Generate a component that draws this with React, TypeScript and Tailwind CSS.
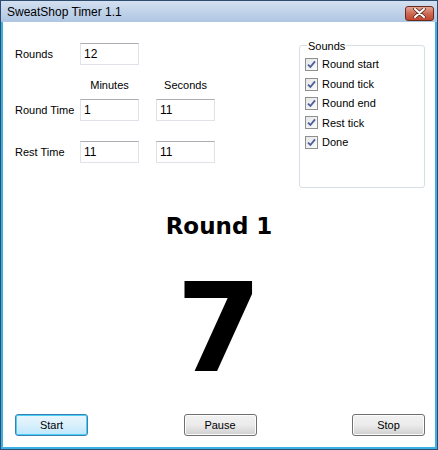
import React from "react";

const ui = { fontFamily: '"Liberation Sans", Arial, sans-serif' };

const Field: React.FC<{ value: string }> = ({ value }) => (
  <div className="w-[59px] h-[22px] border border-[#dfe2e8] border-t-[#abadb3] bg-white pl-[3px] flex items-center text-[12px] text-black">
    {value}
  </div>
);

const Check: React.FC<{ label: string }> = ({ label }) => (
  <div className="flex items-center h-[19.4px]">
    <div className="w-[13px] h-[13px] border border-[#8e8f8f] bg-gradient-to-br from-[#e6e6e6] to-[#fbfbfb] flex items-center justify-center">
      <svg width="9" height="9" viewBox="0 0 9 9">
        <path d="M1 4.6 L3.4 7 L8 1.4" fill="none" stroke="#4a5f9c" strokeWidth="1.8" />
      </svg>
    </div>
    <span className="ml-[4px] text-[11px] text-black">{label}</span>
  </div>
);

const Btn: React.FC<{ label: string; focus?: boolean }> = ({ label, focus }) => (
  <div
    className={
      "w-[73px] h-[22px] rounded-[3px] border flex items-center justify-center text-[11px] text-black " +
      (focus
        ? "border-[#3c7fb1] shadow-[inset_0_0_0_1px_#48d0f9] bg-gradient-to-b from-[#eaf6fd] via-[#d9f0fc] to-[#bee6fd]"
        : "border-[#707070] shadow-[inset_0_0_0_1px_#fcfcfc] bg-gradient-to-b from-[#f2f2f2] via-[#ebebeb] to-[#cfcfcf]")
    }
  >
    {label}
  </div>
);

export default function App() {
  return (
    <div style={ui} className="w-[438px] h-[450px] flex flex-col border border-[#2e4c70] bg-[#b9cde6]">
      {/* title bar */}
      <div className="h-[21px] flex items-center justify-between bg-gradient-to-b from-[#d3e0f0] to-[#aec6e3] pl-[6px] pr-[3px]">
        <span className="text-[12px] text-black">SweatShop Timer 1.1</span>
        <div className="w-[29px] h-[15px] mt-[3px] rounded-[3px] border border-[#6a2b1f] bg-gradient-to-b from-[#e4a594] via-[#cd6a55] to-[#c1452d] flex items-center justify-center">
          <svg width="13" height="10" viewBox="0 0 13 10">
            <path d="M2 1 L11 9 M11 1 L2 9" stroke="#5a2a20" strokeWidth="3.6" strokeLinecap="round" />
            <path d="M2 1 L11 9 M11 1 L2 9" stroke="#ffffff" strokeWidth="2" strokeLinecap="round" />
          </svg>
        </div>
      </div>

      {/* client */}
      <div className="flex-1 flex flex-col bg-white border-l-2 border-r-2 border-b-2 border-[#3ab0e4]">
        <div className="flex pl-[12px] pt-[21px]">
          <div className="w-[200px]">
            <div className="flex items-center">
              <span className="w-[65px] text-[11px]">Rounds</span>
              <Field value="12" />
            </div>
            <div className="flex mt-[13px] h-[14px] items-center text-[11px]">
              <span className="w-[65px]" />
              <span className="w-[59px] text-center">Minutes</span>
              <span className="w-[17px]" />
              <span className="w-[59px] text-center">Seconds</span>
            </div>
            <div className="flex items-center mt-[7px]">
              <span className="w-[65px] text-[11px]">Round Time</span>
              <Field value="1" />
              <span className="w-[17px]" />
              <Field value="11" />
            </div>
            <div className="flex items-center mt-[20px]">
              <span className="w-[65px] text-[11px]">Rest Time</span>
              <Field value="11" />
              <span className="w-[17px]" />
              <Field value="11" />
            </div>
          </div>

          {/* Sounds group */}
          <div className="relative ml-[84px] mt-[2px] w-[126px] h-[143px] rounded-[3px] border border-[#d5dfe5] pl-[5px] pt-[9px]">
            <span className="absolute left-[7px] top-[-8px] bg-white px-[1px] text-[11px]">Sounds</span>
            <Check label="Round start" />
            <Check label="Round tick" />
            <Check label="Round end" />
            <Check label="Rest tick" />
            <Check label="Done" />
          </div>
        </div>

        <div className="flex flex-col items-center" style={{ fontFamily: '"DejaVu Sans", Verdana, sans-serif' }}>
          <div className="mt-[24px] text-[23px] leading-[28px] font-bold text-black">Round 1</div>
          <div className="mt-[24px] text-[123px] leading-[130px] font-bold text-black">7</div>
        </div>

        <div className="mt-auto flex justify-between pl-[12px] pr-[10px] pb-[11px]">
          <Btn label="Start" focus />
          <Btn label="Pause" />
          <Btn label="Stop" />
        </div>
      </div>
    </div>
  );
}
